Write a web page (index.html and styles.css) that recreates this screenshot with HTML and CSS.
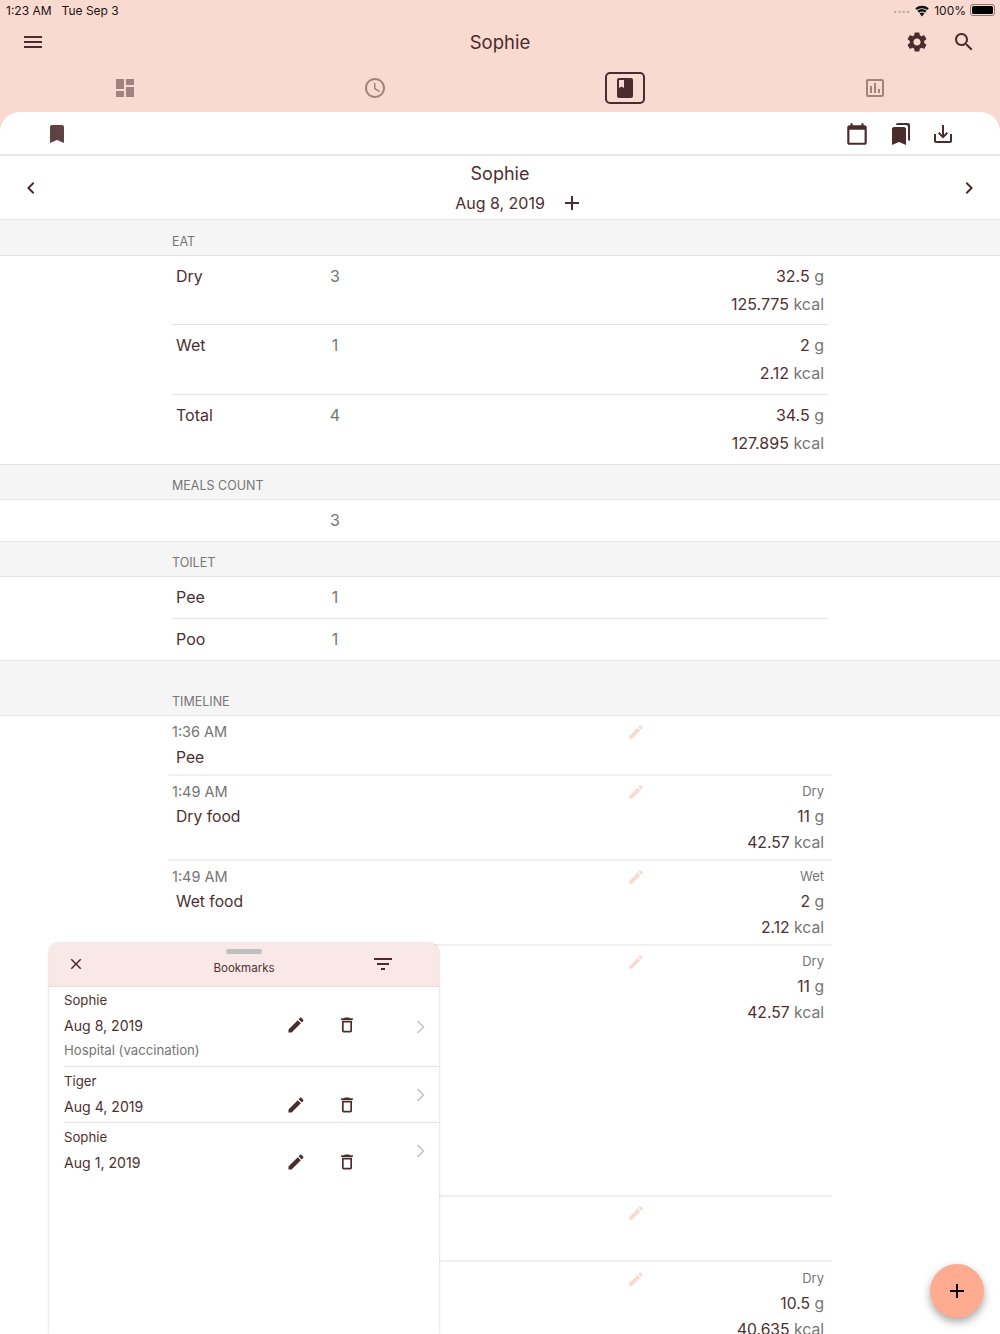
FILE: index.html
```html
<!DOCTYPE html>
<html lang="en">
<head>
<meta charset="utf-8">
<title>Sophie</title>
<link rel="stylesheet" href="styles.css">
</head>
<body>
<svg class="sprite" aria-hidden="true">
  <symbol id="i-menu" viewBox="0 0 24 24"><path d="M3 18h18v-2H3v2zm0-5h18v-2H3v2zm0-7v2h18V6H3z"/></symbol>
  <symbol id="i-dash" viewBox="0 0 24 24"><path d="M3 13h8V3H3v10zm0 8h8v-6H3v6zm10 0h8V11h-8v10zm0-18v6h8V3h-8z"/></symbol>
  <symbol id="i-clock" viewBox="0 0 24 24"><path d="M11.99 2C6.47 2 2 6.48 2 12s4.47 10 9.99 10C17.52 22 22 17.52 22 12S17.52 2 11.99 2zM12 20c-4.42 0-8-3.58-8-8s3.58-8 8-8 8 3.58 8 8-3.58 8-8 8zm.5-13H11v6l5.25 3.15.75-1.23-4.5-2.67z"/></symbol>
  <symbol id="i-gear" viewBox="0 0 24 24"><path d="M19.14 12.94c.04-.3.06-.61.06-.94 0-.32-.02-.64-.07-.94l2.03-1.58a.49.49 0 0 0 .12-.61l-1.92-3.32a.488.488 0 0 0-.59-.22l-2.39.96c-.5-.38-1.03-.7-1.62-.94l-.36-2.54a.484.484 0 0 0-.48-.41h-3.84c-.24 0-.43.17-.47.41l-.36 2.54c-.59.24-1.13.57-1.62.94l-2.39-.96c-.22-.08-.47 0-.59.22L2.74 8.87c-.12.21-.08.47.12.61l2.03 1.58c-.05.3-.09.63-.09.94s.02.64.07.94l-2.03 1.58a.49.49 0 0 0-.12.61l1.92 3.32c.12.22.37.29.59.22l2.39-.96c.5.38 1.03.7 1.62.94l.36 2.54c.05.24.24.41.48.41h3.84c.24 0 .44-.17.47-.41l.36-2.54c.59-.24 1.13-.56 1.62-.94l2.39.96c.22.08.47 0 .59-.22l1.92-3.32c.12-.22.07-.47-.12-.61l-2.01-1.58zM12 15.6c-1.98 0-3.6-1.62-3.6-3.6s1.62-3.6 3.6-3.6 3.6 1.62 3.6 3.6-1.62 3.6-3.6 3.6z"/></symbol>
  <symbol id="i-search" viewBox="0 0 24 24"><path d="M15.5 14h-.79l-.28-.27C15.41 12.59 16 11.11 16 9.5 16 5.91 13.09 3 9.5 3S3 5.91 3 9.5 5.91 16 9.5 16c1.61 0 3.09-.59 4.23-1.57l.27.28v.79l5 4.99L20.49 19l-4.99-5zm-6 0C7.01 14 5 11.99 5 9.5S7.01 5 9.5 5 14 7.01 14 9.5 11.99 14 9.5 14z"/></symbol>
  <symbol id="i-book" viewBox="0 0 24 24"><path d="M18 2H6c-1.1 0-2 .9-2 2v16c0 1.1.9 2 2 2h12c1.1 0 2-.9 2-2V4c0-1.1-.9-2-2-2zM6 4h5v8l-2.5-1.5L6 12V4z"/></symbol>
  <symbol id="i-chart" viewBox="0 0 24 24"><path d="M19 3H5c-1.1 0-2 .9-2 2v14c0 1.1.9 2 2 2h14c1.1 0 2-.9 2-2V5c0-1.1-.9-2-2-2zm0 16H5V5h14v14zM7 10h2v7H7zm4-3h2v10h-2zm4 6h2v4h-2z"/></symbol>
  <symbol id="i-bookmark" viewBox="0 0 24 24"><path d="M17 3H7c-1.1 0-1.99.9-1.99 2L5 21l7-3 7 3V5c0-1.1-.9-2-2-2z"/></symbol>
  <symbol id="i-calendar" viewBox="0 0 24 24"><path d="M19 4h-1V2h-2v2H8V2H6v2H5c-1.1 0-2 .9-2 2v14c0 1.1.9 2 2 2h14c1.1 0 2-.9 2-2V6c0-1.1-.9-2-2-2zm0 16H5V8h14v12z"/></symbol>
  <symbol id="i-bookmarks" viewBox="0 0 24 24"><path d="M19 18l2 1V3c0-1.1-.9-2-2-2H8.99C7.89 1 7 1.9 7 3h10c1.1 0 2 .9 2 2v13zM15 5H5c-1.1 0-2 .9-2 2v16l7-3 7 3V7c0-1.1-.9-2-2-2z"/></symbol>
  <symbol id="i-download" viewBox="0 0 24 24"><path d="M19 12v7H5v-7H3v7c0 1.1.9 2 2 2h14c1.1 0 2-.9 2-2v-7h-2zm-6 .67l2.59-2.58L17 11.5l-5 5-5-5 1.41-1.41L11 12.67V3h2z"/></symbol>
  <symbol id="i-left" viewBox="0 0 24 24"><path d="M15.41 7.41L14 6l-6 6 6 6 1.41-1.41L10.83 12z"/></symbol>
  <symbol id="i-right" viewBox="0 0 24 24"><path d="M10 6L8.59 7.41 13.17 12l-4.58 4.59L10 18l6-6z"/></symbol>
  <symbol id="i-add" viewBox="0 0 24 24"><path d="M19 13h-6v6h-2v-6H5v-2h6V5h2v6h6v2z"/></symbol>
  <symbol id="i-edit" viewBox="0 0 24 24"><path d="M3 17.25V21h3.75L17.81 9.94l-3.75-3.75L3 17.25zM20.71 7.04c.39-.39.39-1.02 0-1.41l-2.34-2.34c-.39-.39-1.02-.39-1.41 0l-1.83 1.83 3.75 3.75 1.83-1.83z"/></symbol>
  <symbol id="i-trash" viewBox="0 0 24 24"><path d="M6 19c0 1.1.9 2 2 2h8c1.1 0 2-.9 2-2V7H6v12zM8 9h8v10H8V9zm7.5-5l-1-1h-5l-1 1H5v2h14V4z"/></symbol>
  <symbol id="i-close" viewBox="0 0 24 24"><path d="M19 6.41L17.59 5 12 10.59 6.41 5 5 6.41 10.59 12 5 17.59 6.41 19 12 13.41 17.59 19 19 17.59 13.41 12z"/></symbol>
  <symbol id="i-filter" viewBox="0 0 24 24"><path d="M10 18h4v-2h-4v2zM3 6v2h18V6H3zm3 7h12v-2H6v2z"/></symbol>
  <symbol id="i-wifi" viewBox="0 0 24 24"><path d="M12 20.5l3.2-3.9a5 5 0 0 0-6.4 0zM5.9 13.1l2 2.4a6.500 6.500 0 0 1 8.200 0l2-2.400a9.700 9.700 0 0 0-12.200 0zM3 9.600l2 2.400a11.200 11.200 0 0 1 14 0l2-2.400a14.300 14.300 0 0 0-18 0z"/></symbol>
  <symbol id="i-thin" viewBox="0 0 10 14"><path d="M1.500 1l6 6-6 6" fill="none" stroke="currentColor" stroke-width="1.300"/></symbol>
</svg>

<div class="page">
  <header class="top">
    <div class="status">
      <span class="status-left"><span>1:23 AM</span><span>Tue Sep 3</span></span>
      <span class="status-right">
        <span class="signal">....</span>
        <svg class="ic-wifi"><use href="#i-wifi"/></svg>
        <span>100%</span>
        <span class="battery"><span class="battery-fill"></span></span>
      </span>
    </div>
    <div class="appbar">
      <svg class="ic ic-menu"><use href="#i-menu"/></svg>
      <h1 class="title">Sophie</h1>
      <span class="appbar-actions">
        <svg class="ic ic-gear"><use href="#i-gear"/></svg>
        <svg class="ic"><use href="#i-search"/></svg>
      </span>
    </div>
    <nav class="tabs">
      <span class="tab"><svg class="ic dim"><use href="#i-dash"/></svg></span>
      <span class="tab"><svg class="ic dim"><use href="#i-clock"/></svg></span>
      <span class="tab"><span class="tab-box"><svg class="ic"><use href="#i-book"/></svg></span></span>
      <span class="tab"><svg class="ic dim"><use href="#i-chart"/></svg></span>
    </nav>
  </header>

  <main class="card">
    <div class="toolbar">
      <svg class="ic ic-soft"><use href="#i-bookmark"/></svg>
      <span class="toolbar-actions">
        <svg class="ic ic-cal"><use href="#i-calendar"/></svg>
        <svg class="ic"><use href="#i-bookmarks"/></svg>
        <svg class="ic"><use href="#i-download"/></svg>
      </span>
    </div>

    <div class="datebar">
      <svg class="ic"><use href="#i-left"/></svg>
      <div class="datebar-mid">
        <div class="datebar-name">Sophie</div>
        <div class="datebar-date"><span>Aug 8, 2019</span><svg class="ic ic-add"><use href="#i-add"/></svg></div>
      </div>
      <svg class="ic"><use href="#i-right"/></svg>
    </div>

    <div class="section section-first">EAT</div>
    <div class="row row-tall row-first"><span>Dry</span><span class="count">3</span><span class="vals"><span class="val">32.5 <i>g</i></span><span class="val">125.775 <i>kcal</i></span></span></div>
    <div class="row row-tall"><span>Wet</span><span class="count">1</span><span class="vals"><span class="val">2 <i>g</i></span><span class="val">2.12 <i>kcal</i></span></span></div>
    <div class="row row-tall row-last"><span>Total</span><span class="count">4</span><span class="vals"><span class="val">34.5 <i>g</i></span><span class="val">127.895 <i>kcal</i></span></span></div>

    <div class="section">MEALS COUNT</div>
    <div class="row row-last"><span></span><span class="count">3</span></div>

    <div class="section">TOILET</div>
    <div class="row"><span>Pee</span><span class="count">1</span></div>
    <div class="row row-last"><span>Poo</span><span class="count">1</span></div>

    <div class="section section-tall">TIMELINE</div>
    <div class="entry">
      <div><div class="time">1:36 AM</div><div class="what">Pee</div></div>
      <svg class="pencil"><use href="#i-edit"/></svg>
    </div>
    <div class="entry">
      <div><div class="time">1:49 AM</div><div class="what">Dry food</div></div>
      <svg class="pencil"><use href="#i-edit"/></svg>
      <div class="vals-t"><div class="kind">Dry</div><div class="val">11 <i>g</i></div><div class="val">42.57 <i>kcal</i></div></div>
    </div>
    <div class="entry">
      <div><div class="time">1:49 AM</div><div class="what">Wet food</div></div>
      <svg class="pencil"><use href="#i-edit"/></svg>
      <div class="vals-t"><div class="kind">Wet</div><div class="val">2 <i>g</i></div><div class="val">2.12 <i>kcal</i></div></div>
    </div>
    <div class="entry entry-long">
      <div></div>
      <svg class="pencil"><use href="#i-edit"/></svg>
      <div class="vals-t"><div class="kind">Dry</div><div class="val">11 <i>g</i></div><div class="val">42.57 <i>kcal</i></div></div>
    </div>
    <div class="entry entry-short">
      <div></div>
      <svg class="pencil"><use href="#i-edit"/></svg>
    </div>
    <div class="entry entry-last">
      <div></div>
      <svg class="pencil"><use href="#i-edit"/></svg>
      <div class="vals-t"><div class="kind">Dry</div><div class="val">10.5 <i>g</i></div><div class="val">40.635 <i>kcal</i></div></div>
    </div>
  </main>

  <aside class="sheet">
    <div class="sheet-head">
      <span class="handle"></span>
      <svg class="ic ic-close"><use href="#i-close"/></svg>
      <span class="sheet-title">Bookmarks</span>
      <svg class="ic"><use href="#i-filter"/></svg>
    </div>
    <div class="mark">
      <div class="mark-body">
        <div class="mark-name">Sophie</div>
        <div class="mark-date"><span class="mark-day">Aug 8, 2019</span><svg class="ic-sm"><use href="#i-edit"/></svg><svg class="ic-sm"><use href="#i-trash"/></svg></div>
        <div class="mark-note">Hospital (vaccination)</div>
      </div>
      <svg class="thin"><use href="#i-thin"/></svg>
    </div>
    <div class="mark">
      <div class="mark-body">
        <div class="mark-name">Tiger</div>
        <div class="mark-date"><span class="mark-day">Aug 4, 2019</span><svg class="ic-sm"><use href="#i-edit"/></svg><svg class="ic-sm"><use href="#i-trash"/></svg></div>
      </div>
      <svg class="thin"><use href="#i-thin"/></svg>
    </div>
    <div class="mark mark-last">
      <div class="mark-body">
        <div class="mark-name">Sophie</div>
        <div class="mark-date"><span class="mark-day">Aug 1, 2019</span><svg class="ic-sm"><use href="#i-edit"/></svg><svg class="ic-sm"><use href="#i-trash"/></svg></div>
      </div>
      <svg class="thin"><use href="#i-thin"/></svg>
    </div>
  </aside>

  <button class="fab" type="button" aria-label="Add"><svg class="ic"><use href="#i-add"/></svg></button>
</div>
</body>
</html>
```

FILE: styles.css
```css
* { box-sizing: border-box; }
html, body { margin: 0; padding: 0; background: #fff; }
body { font-family: Inter, "Noto Sans", "Liberation Sans", sans-serif; color: #4e2f31; font-size: 16px; }
.sprite { display: none; }
.page { position: relative; width: 1000px; height: 1334px; overflow: hidden; background: #fff; }

.ic { width: 24px; height: 24px; fill: #4a2c2e; flex: none; display: block; }
.dim { opacity: .5; }
.ic-soft { fill: #5f4244; }
.ic-cal { width: 26px; height: 26px; }

.top { background: #f9dad0; height: 132px; }
.status { height: 20px; display: flex; justify-content: space-between; align-items: center; padding: 0 5px 0 6px; font-size: 12px; color: #1c1212; }
.status-left { display: flex; gap: 10px; }
.status-right { display: flex; align-items: center; }
.signal { color: #b5a8a4; font-size: 13px; font-weight: 700; line-height: 6px; margin-right: 3px; padding-bottom: 5px; }
.ic-wifi { width: 18px; height: 18px; fill: #111; margin-right: 3px; }
.battery { width: 25px; height: 12px; border: 1px solid #8a7672; border-radius: 3px; padding: 1px; margin-left: 4px; display: block; }
.battery-fill { display: block; height: 100%; background: #000; border-radius: 1.5px; }

.appbar { height: 44px; display: flex; align-items: center; justify-content: space-between; padding: 0 24px 0 21px; position: relative; }
.title { position: absolute; left: 0; right: 0; margin: 0; text-align: center; font-size: 18.500px; font-weight: 400; color: #4a2c2e; }
.appbar-actions { display: flex; gap: 23px; position: relative; }
.tabs { height: 48px; display: grid; grid-template-columns: repeat(4, 1fr); }
.tab { display: flex; align-items: center; justify-content: center; }
.tab-box { width: 40px; height: 32px; border: 2px solid #4a2c2e; border-radius: 5px; display: flex; align-items: center; justify-content: center; }

.card { background: #fff; border-radius: 20px 20px 0 0; margin-top: -20px; position: relative; }
.toolbar { height: 44px; display: flex; align-items: center; justify-content: space-between; padding: 2px 45px 0 45px; border-bottom: 2px solid #e9e7e7; }
.toolbar-actions { display: flex; align-items: center; gap: 18.500px; }
.datebar { height: 63px; display: flex; align-items: center; justify-content: space-between; padding: 0 19px; }
.datebar-mid { text-align: center; position: relative; }
.datebar-name { font-size: 18px; line-height: 30px; margin-top: 1px; }
.datebar-date { font-size: 16px; line-height: 28px; position: relative; }
.ic-add { position: absolute; left: calc(100% + 15px); top: 2px; }

.section { height: 36px; background: #f5f5f5; border-top: 1px solid #e3e3e3; border-bottom: 1px solid #e3e3e3; padding: 0 0 5px 172px; display: flex; align-items: flex-end; font-size: 12.500px; color: #757575; line-height: 16px; }
.section-first { height: 37px; }
.section-tall { height: 56px; }

.row { margin-left: 172px; width: 656px; min-height: 42px; display: grid; grid-template-columns: 126px 66px 1fr; padding: 6px 4px 0; line-height: 28px; border-bottom: 1px solid #e3e3e3; font-size: 16px; }
.row-tall { height: 70px; }
.row-first { height: 69px; padding-top: 5.500px; }
.row-last { border-bottom: 0; min-height: 41px; }
.row-tall.row-last { height: 69px; }
.count { text-align: center; color: #757575; }
.vals { display: flex; flex-direction: column; align-items: flex-end; }
.val { color: #4e2f31; }
.val i { font-style: normal; color: #757575; }

.entry { margin-left: 168px; width: 664px; display: grid; grid-template-columns: 460px 16px 1fr; padding: 3px 8px 3.500px 4px; border-bottom: 2px solid #f1f0f0; line-height: 25.500px; min-height: 59px; }
.entry-long { height: 251px; }
.entry-short { height: 65px; }
.entry-last { padding-top: 4px; }
.time { color: #757575; font-size: 14.500px; }
.what { padding-left: 4px; font-size: 15.700px; }
.pencil { width: 18px; height: 18px; fill: #f9dad0; margin-top: 4px; margin-left: -5px; }
.vals-t { text-align: right; font-size: 15.700px; }
.kind { color: #757575; font-size: 13px; }

.sheet { position: absolute; left: 49px; top: 943px; bottom: 0; width: 390px; background: #fff; border-radius: 10px 10px 0 0; box-shadow: 0 0 2px rgba(0,0,0,.3); }
.sheet-head { height: 44px; background: #fae8e7; border-radius: 10px 10px 0 0; border-bottom: 1px solid #e5dcdc; display: grid; grid-template-columns: 112px 1fr 112px; align-items: center; justify-items: center; position: relative; }
.sheet-head .ic { margin-bottom: 1px; }
.sheet-head .ic-close { width: 18px; height: 18px; justify-self: start; margin-left: 18px; }
.handle { position: absolute; left: 177px; top: 6px; width: 36px; height: 5px; border-radius: 3px; background: #bfc1c0; }
.sheet-title { font-size: 11.500px; padding-top: 7px; grid-column: 2; }
.mark { margin-left: 15px; display: flex; align-items: center; border-bottom: 1px solid #e3e3e3; min-height: 56px; padding-right: 13px; }
.mark-last { border-bottom: 0; }
.mark-body { flex: 1; padding: 1px 0 3px; line-height: 25px; }
.mark-name { font-size: 13.200px; line-height: 25px; }
.mark-date { display: flex; align-items: center; font-size: 14.100px; }
.mark-day { width: 222px; }
.ic-sm { width: 20px; height: 20px; fill: #4a2c2e; margin-right: 30.500px; margin-bottom: 2px; }
.mark-note { font-size: 13.200px; color: #757575; }
.thin { width: 10px; height: 14px; color: #bdbdbd; flex: none; }

.fab { position: absolute; left: 930px; top: 1264px; width: 54px; height: 54px; border-radius: 50%; border: 0; background: #ffab91; box-shadow: 0 4px 8px rgba(0,0,0,.35); display: flex; align-items: center; justify-content: center; padding: 0; }
.fab .ic { fill: #000; }
```
